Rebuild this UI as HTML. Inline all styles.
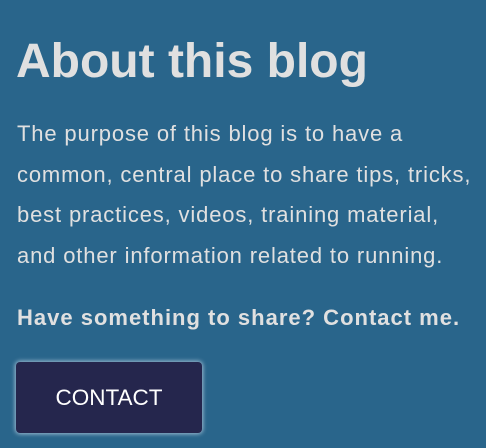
<!DOCTYPE html>
<html><head><style>
html,body{margin:0;padding:0;}
body{width:486px;height:448px;background:#29658b;color:#e0e0e0;font-family:"Liberation Sans",Arial,sans-serif;overflow:hidden;position:relative;}
h1{position:absolute;left:16px;top:29px;margin:0;font-size:48px;line-height:66px;font-weight:bold;white-space:nowrap;}
p.t{position:absolute;left:17px;top:114px;margin:0;font-size:22px;letter-spacing:0.85px;line-height:40.7px;width:480px;white-space:nowrap;}
p.b{position:absolute;left:17px;top:303px;margin:0;font-size:22px;letter-spacing:1px;font-weight:bold;line-height:30px;white-space:nowrap;}
.btn{position:absolute;left:16px;top:362px;width:186px;height:71px;background:#25264d;border-radius:4px;box-shadow:0 0 4px 1px rgba(210,225,240,0.7);color:#fff;font-size:22.5px;display:flex;align-items:center;justify-content:center;}
</style></head><body>
<h1>About this blog</h1>
<p class="t">The purpose of this blog is to have a<br>common, central place to share tips, tricks,<br>best practices, videos, training material,<br>and other information related to running.</p>
<p class="b">Have something to share? Contact me.</p>
<div class="btn">CONTACT</div>
</body></html>
